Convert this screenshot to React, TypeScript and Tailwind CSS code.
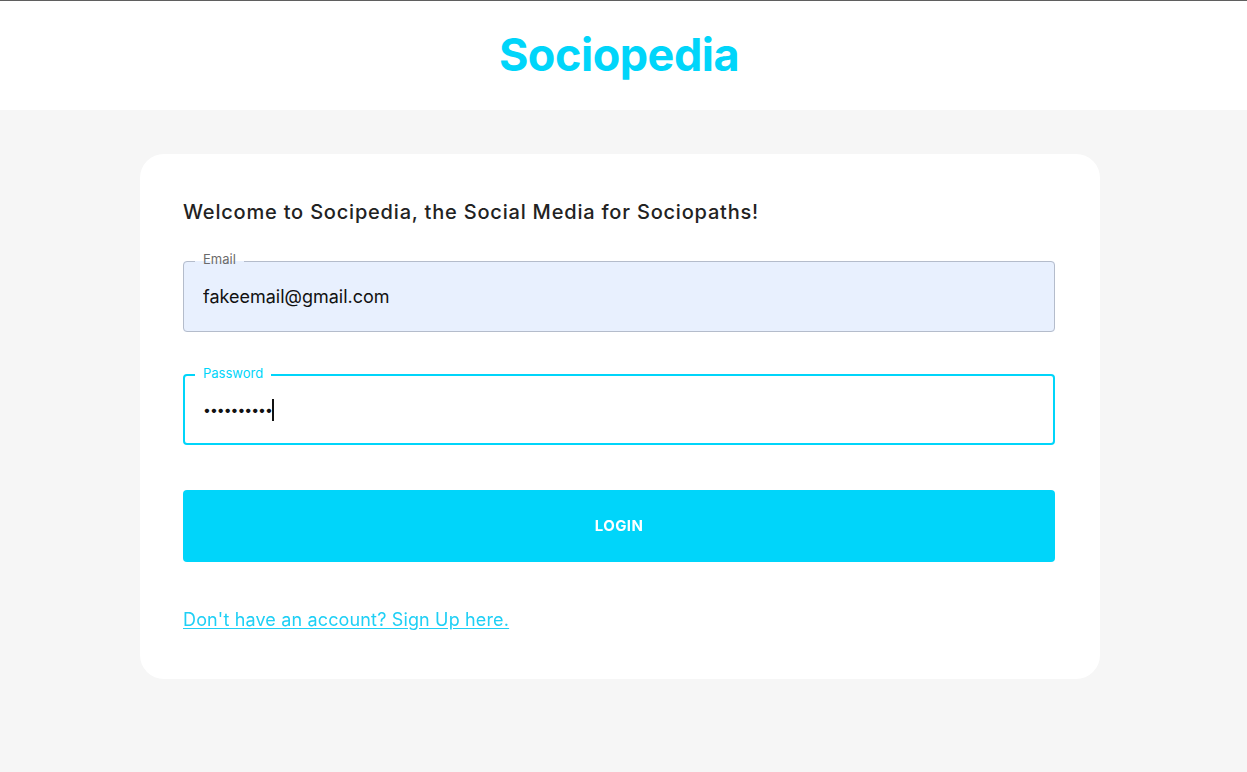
import React, { useState } from 'react'

const font = { fontFamily: 'Inter, "Noto Sans", sans-serif' }

export default function App() {
  const [email, setEmail] = useState('fakeemail@gmail.com')
  const [password, setPassword] = useState('fakepass12')

  return (
    <div className="min-h-screen bg-[#f6f6f6]" style={font}>
      {/* top bar */}
      <div className="h-[110px] bg-white border-t border-[#5f5f5f] flex items-center justify-center pr-[9px]">
        <h1 className="text-[45px] font-bold text-[#00d5fa] tracking-[-0.5px] leading-none -mt-[2px]">
          Sociopedia
        </h1>
      </div>

      <div className="w-[960px] ml-[140px] mt-[44px] bg-white rounded-[24px] pl-[43px] pr-[45px] pt-[44px] pb-[47px]">
        <h2 className="text-[20px] leading-[28px] font-medium text-[#222] tracking-[0.8px]">
          Welcome to Socipedia, the Social Media for Sociopaths!
        </h2>

        <form className="mt-[26px]" onSubmit={(e) => e.preventDefault()}>
          <fieldset className="border border-[#b4bccb] rounded-[4px] bg-[#e8f0fe]">
            <legend className="ml-[11px] px-[8px] pb-[4px] text-[13px] leading-[14px] text-[#6b6b6b]">Email</legend>
            <input
              type="email"
              value={email}
              onChange={(e) => setEmail(e.target.value)}
              className="block w-full h-[70px] -mt-[9px] pl-[19px] pr-4 bg-transparent text-[18px] text-[#111] outline-none"
            />
          </fieldset>

          <fieldset className="mt-[34px] border-2 border-[#00d5fa] rounded-[4px]">
            <legend className="ml-[10px] px-[8px] pb-[4px] text-[13px] leading-[14px] text-[#00d5fa]">Password</legend>
            <div className="flex items-center h-[67px] -mt-[8px] pl-[18px] pr-4">
              <input
                type="password"
                value={password}
                autoFocus
                onChange={(e) => setPassword(e.target.value)}
                className="w-[70px] bg-transparent text-[14px] text-[#111] outline-none tracking-[-1px]"
              />
              <span className="w-[2px] h-[22px] bg-[#111] -ml-[1px]" />
            </div>
          </fieldset>

          <button
            type="submit"
            className="mt-[45px] w-full h-[72px] rounded-[4px] bg-[#00d5fa] text-white text-[15px] font-bold tracking-[0.4px]"
          >
            LOGIN
          </button>

          <div className="mt-[46px]">
            <a href="#" className="text-[18px] leading-[24px] text-[#1ecff5] underline underline-offset-2 tracking-[0.15px]">
              Don't have an account? Sign Up here.
            </a>
          </div>
        </form>
      </div>
    </div>
  )
}
